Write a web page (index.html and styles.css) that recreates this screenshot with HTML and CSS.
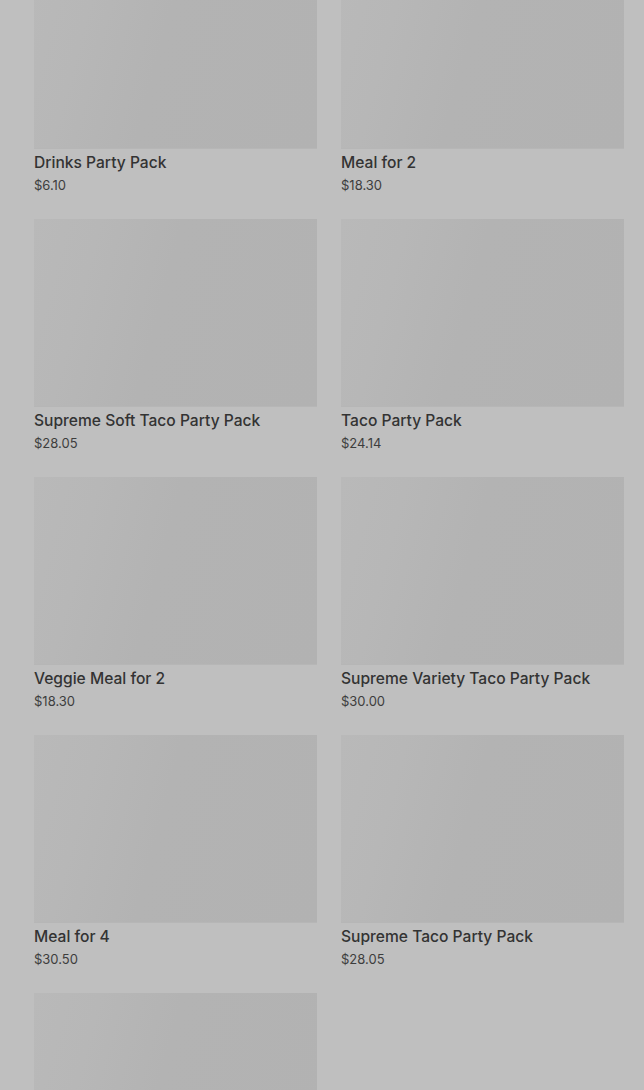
FILE: index.html
```html
<!DOCTYPE html>
<html lang="en">
<head>
<meta charset="utf-8">
<title>Menu</title>
<link rel="stylesheet" href="styles.css">
</head>
<body>
<main class="grid">
  <article class="card"><div class="thumb"></div><h3 class="name">Drinks Party Pack</h3><p class="price">$6.10</p></article>
  <article class="card"><div class="thumb"></div><h3 class="name">Meal for 2</h3><p class="price">$18.30</p></article>
  <article class="card"><div class="thumb"></div><h3 class="name">Supreme Soft Taco Party Pack</h3><p class="price">$28.05</p></article>
  <article class="card"><div class="thumb"></div><h3 class="name">Taco Party Pack</h3><p class="price">$24.14</p></article>
  <article class="card"><div class="thumb"></div><h3 class="name">Veggie Meal for 2</h3><p class="price">$18.30</p></article>
  <article class="card"><div class="thumb"></div><h3 class="name">Supreme Variety Taco Party Pack</h3><p class="price">$30.00</p></article>
  <article class="card"><div class="thumb"></div><h3 class="name">Meal for 4</h3><p class="price">$30.50</p></article>
  <article class="card"><div class="thumb"></div><h3 class="name">Supreme Taco Party Pack</h3><p class="price">$28.05</p></article>
  <article class="card"><div class="thumb"></div></article>
</main>
</body>
</html>
```

FILE: styles.css
```css
html, body {
  margin: 0;
  padding: 0;
  background: #bfbfbf;
  overflow: hidden;
}
body {
  font-family: Inter, "Noto Sans", sans-serif;
  color: #333;
}
.grid {
  display: grid;
  grid-template-columns: 1fr 1fr;
  column-gap: 24px;
  row-gap: 26px;
  padding: 0 20px 0 34px;
  margin-top: -39px;
}
.card {
  display: flex;
  flex-direction: column;
}
.thumb {
  height: 188px;
  background: linear-gradient(105deg, #b9b9b9 0%, #b7b7b7 20%, #b3b3b3 45%, #b2b2b2 100%);
  border-bottom: 1px solid #b6b6b6;
  box-sizing: border-box;
}
.name {
  margin: 4px 0 0;
  font-size: 15.6px;
  line-height: 20px;
  font-weight: 500;
  color: #333;
}
.price {
  margin: 4px 0 0;
  font-size: 13px;
  line-height: 16px;
  color: #3d3d3d;
}
```
